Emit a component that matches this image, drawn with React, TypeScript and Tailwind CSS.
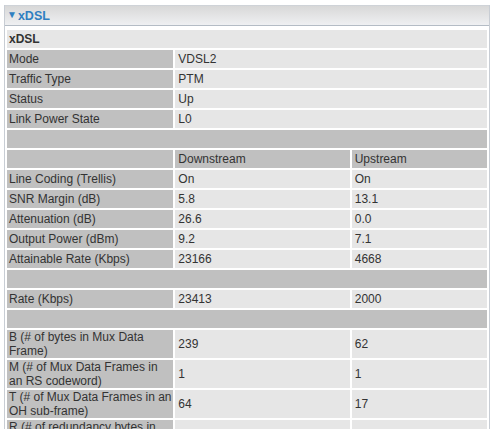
import React from "react";

const L = "bg-[#c0c0c0] h-[18px] pl-[2px] pr-[1px] align-middle text-left font-normal";
const V = "bg-[#e6e6e6] h-[18px] pl-[3px] align-middle text-left font-normal";

type Row =
  | { kind: "title"; text: string }
  | { kind: "sep" }
  | { kind: "pair"; label: string; value: string }
  | { kind: "tri"; label: string; a: string; b: string; head?: boolean };

const rows: Row[] = [
  { kind: "title", text: "xDSL" },
  { kind: "pair", label: "Mode", value: "VDSL2" },
  { kind: "pair", label: "Traffic Type", value: "PTM" },
  { kind: "pair", label: "Status", value: "Up" },
  { kind: "pair", label: "Link Power State", value: "L0" },
  { kind: "sep" },
  { kind: "tri", label: "", a: "Downstream", b: "Upstream", head: true },
  { kind: "tri", label: "Line Coding (Trellis)", a: "On", b: "On" },
  { kind: "tri", label: "SNR Margin (dB)", a: "5.8", b: "13.1" },
  { kind: "tri", label: "Attenuation (dB)", a: "26.6", b: "0.0" },
  { kind: "tri", label: "Output Power (dBm)", a: "9.2", b: "7.1" },
  { kind: "tri", label: "Attainable Rate (Kbps)", a: "23166", b: "4668" },
  { kind: "sep" },
  { kind: "tri", label: "Rate (Kbps)", a: "23413", b: "2000" },
  { kind: "sep" },
  { kind: "tri", label: "B (# of bytes in Mux Data Frame)", a: "239", b: "62" },
  { kind: "tri", label: "M (# of Mux Data Frames in an RS codeword)", a: "1", b: "1" },
  { kind: "tri", label: "T (# of Mux Data Frames in an OH sub-frame)", a: "64", b: "17" },
  { kind: "tri", label: "R (# of redundancy bytes in the RS codeword per Mux Data Frame)", a: "16", b: "16" },
  { kind: "tri", label: "S (# of data symbols over which the RS code word spans)", a: "0.2474", b: "1.9692" },
];

export default function App() {
  return (
    <div
      className="h-[429px] w-[496px] overflow-hidden bg-white text-[12px] leading-[14px] text-[#333333]"
      style={{ fontFamily: '"Liberation Sans", Arial, sans-serif' }}
    >
      <div className="ml-[4px] mt-[5px] w-[486px] border-x border-[#c8cdd4] min-h-[500px]">
        <div className="h-[21px] border-t border-b border-t-[#cfd3d8] border-b-[#b4bcc5] bg-gradient-to-b from-[#d8d8d8] to-[#eff0f2] flex items-center pl-[2px]">
          <span className="text-[#2f7fc1] text-[10px] leading-none mr-[1px] -mt-[1px]">▼</span>
          <span className="font-bold text-[#2f7fc1] text-[12.5px]">xDSL</span>
        </div>
        <table className="border-separate border-spacing-[2px] w-[484px] table-fixed mt-[2px]">
          <colgroup>
            <col className="w-[166px]" />
            <col className="w-[174px]" />
            <col className="w-[135px]" />
          </colgroup>
          <tbody>
            {rows.map((r, i) => {
              if (r.kind === "title")
                return (
                  <tr key={i}>
                    <td colSpan={3} className="bg-[#e6e6e6] h-[18px] pl-[2px] font-bold align-middle">
                      {r.text}
                    </td>
                  </tr>
                );
              if (r.kind === "sep")
                return (
                  <tr key={i}>
                    <td colSpan={3} className="bg-[#c0c0c0] h-[18px]"></td>
                  </tr>
                );
              if (r.kind === "pair")
                return (
                  <tr key={i}>
                    <td className={L}>{r.label}</td>
                    <td colSpan={2} className={V}>
                      {r.value}
                    </td>
                  </tr>
                );
              const vc = r.head ? "bg-[#c0c0c0] h-[18px] pl-[3px] align-middle" : V;
              return (
                <tr key={i}>
                  <td className={L}>{r.label}</td>
                  <td className={vc}>{r.a}</td>
                  <td className={vc}>{r.b}</td>
                </tr>
              );
            })}
          </tbody>
        </table>
      </div>
    </div>
  );
}
